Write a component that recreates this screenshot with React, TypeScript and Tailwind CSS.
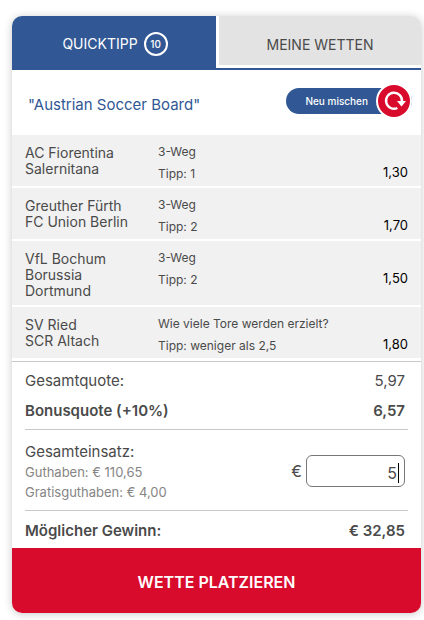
const bets = [
  { teams: ["AC Fiorentina", "Salernitana"], market: "3-Weg", tip: "Tipp: 1", odds: "1,30" },
  { teams: ["Greuther Fürth", "FC Union Berlin"], market: "3-Weg", tip: "Tipp: 2", odds: "1,70" },
  { teams: ["VfL Bochum", "Borussia Dortmund"], market: "3-Weg", tip: "Tipp: 2", odds: "1,50" },
  { teams: ["SV Ried", "SCR Altach"], market: "Wie viele Tore werden erzielt?", tip: "Tipp: weniger als 2,5", odds: "1,80" },
];

function Tabs() {
  return (
    <div role="tablist" className="flex">
      <button
        role="tab"
        aria-selected="true"
        className="flex h-[54px] flex-1 items-center justify-center gap-[6px] bg-[#315894] pt-[2px] pl-[2px] text-sm text-white"
      >
        QUICKTIPP
        <span className="flex size-6 items-center justify-center rounded-full border-2 border-white text-[10px] font-medium">
          10
        </span>
      </button>
      <div className="flex h-[54px] flex-1 border-b-2 border-[#315894] pb-[3px] pl-[3px]">
        <button role="tab" aria-selected="false" className="flex-1 bg-[#e3e3e3] pt-2 text-sm text-[#4a4a4a]">
          MEINE WETTEN
        </button>
      </div>
    </div>
  );
}

function ShuffleButton() {
  return (
    <button className="mb-[3px] flex h-[26px] items-center rounded-full bg-[#315894] pl-[19px] text-[10px] font-medium text-white">
      Neu mischen
      <span className="ml-2 flex size-9 items-center justify-center rounded-full border-2 border-white bg-[#d80b2c]">
        <svg viewBox="0 0 24 24" className="size-6" fill="none" stroke="white" strokeWidth="2.4" aria-hidden="true">
          <path d="M15.4 19A8 8 0 1 1 20 12.5" />
          <path d="M15 12h9l-4.5 5.4z" fill="white" stroke="none" />
        </svg>
      </span>
    </button>
  );
}

export default function App() {
  return (
    <main className="px-3 pt-4 pb-2 font-['Inter','Liberation_Sans',sans-serif] text-[#4a4a4a]">
      <section className="-mr-[9px] overflow-hidden rounded-[10px] bg-white shadow-[0_1px_8px_rgba(0,0,0,0.22)]">
        <Tabs />
        <header className="flex h-[65px] items-center justify-between pr-[9px] pl-4">
          <h1 className="pt-[6px] text-[15px] text-[#315894]">"Austrian Soccer Board"</h1>
          <ShuffleButton />
        </header>
        <ul className="flex flex-col gap-[2px]">
          {bets.map((bet) => (
            <li key={bet.teams[0]} className="flex bg-[#f1f1f1] px-[13px]">
              <div className="w-[133px] shrink-0 pt-[10px] pb-[6px] text-sm leading-4">
                <div>{bet.teams[0]}</div>
                <div className="w-[110px]">{bet.teams[1]}</div>
              </div>
              <div className="flex-1 pt-[6px] pb-px text-xs leading-[22px]">
                <div>{bet.market}</div>
                <div className="flex justify-between">
                  <span>{bet.tip}</span>
                  <span className="text-[13px] leading-[18px] text-black">{bet.odds}</span>
                </div>
              </div>
            </li>
          ))}
        </ul>
        <div className="mt-[3px] border-t border-[#c8c8c8] px-[13px]">
          <dl className="pt-1 text-[15px] leading-[30px]">
            <div className="flex justify-between pr-[3px]">
              <dt>Gesamtquote:</dt>
              <dd>5,97</dd>
            </div>
            <div className="flex justify-between pr-[3px] font-semibold">
              <dt>Bonusquote (+10%)</dt>
              <dd>6,57</dd>
            </div>
          </dl>
          <div className="mt-[3px] flex h-[82px] items-center justify-between border-y border-[#c8c8c8] pt-[2px] pr-[3px]">
            <div className="pt-[2px] text-[13px] leading-5 text-[#858585]">
              <label htmlFor="stake" className="text-[15px] text-[#4a4a4a]">
                Gesamteinsatz:
              </label>
              <p>Guthaben: € 110,65</p>
              <p>Gratisguthaben: € 4,00</p>
            </div>
            <div className="flex items-center gap-1 text-base">
              <span>€</span>
              <div className="relative">
                <input
                  id="stake"
                  type="text"
                  inputMode="decimal"
                  defaultValue="5"
                  className="block h-8 w-[99px] rounded-md border border-[#777] bg-white pt-1 pr-[7px] text-right outline-none"
                />
                <span className="absolute top-2 right-[6px] h-5 w-px bg-black" />
              </div>
            </div>
          </div>
          <div className="flex justify-between pt-[5px] pr-[3px] pb-[2px] text-[15px] leading-[30px] font-semibold">
            <span>Möglicher Gewinn:</span>
            <output htmlFor="stake">€ 32,85</output>
          </div>
        </div>
        <button className="block h-[65px] w-full bg-[#d80b2c] pt-[3px] text-base font-semibold text-white">
          WETTE PLATZIEREN
        </button>
      </section>
    </main>
  );
}
